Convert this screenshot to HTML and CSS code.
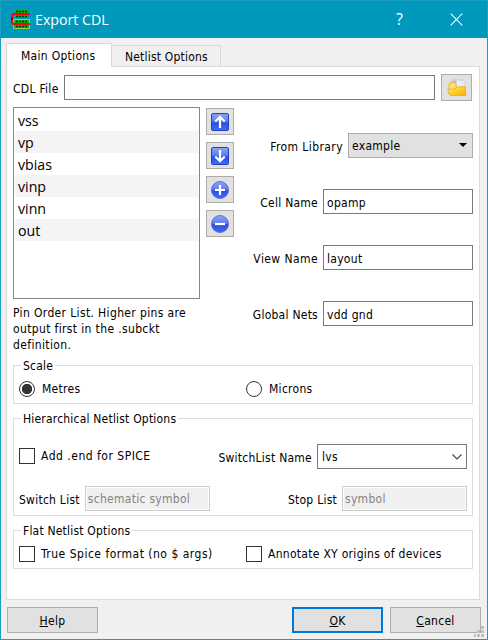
FILE: index.html
```html
<!DOCTYPE html>
<html lang="en">
<head>
<meta charset="utf-8">
<title>Export CDL</title>
<link rel="stylesheet" href="styles.css">
</head>
<body>
<svg class="defs" width="0" height="0">
  <defs>
    <linearGradient id="blue" x1="0" y1="0" x2="0" y2="1">
      <stop offset="0" stop-color="#8fa5f4"/>
      <stop offset=".45" stop-color="#5f7cf0"/>
      <stop offset=".55" stop-color="#2a4fe6"/>
      <stop offset="1" stop-color="#3f6df8"/>
    </linearGradient>
    <linearGradient id="gold" x1="0" y1="0" x2="1" y2="1">
      <stop offset="0" stop-color="#fff2a0"/>
      <stop offset=".5" stop-color="#ffd21c"/>
      <stop offset="1" stop-color="#ffa412"/>
    </linearGradient>
  </defs>
</svg>
<div class="window">
  <header class="titlebar">
    <svg class="logo" width="20" height="20" viewBox="0 0 20 20">
      <path fill="#0cae14" d="M4 0h13v8H4z"/>
      <path fill="#0cae14" stroke="#86d94a" d="M2.500 9.500h16v9h-16z"/>
      <path stroke="#053a05" stroke-width="1.500" stroke-dasharray="2 1" d="M5 1.500h11M5 6.500h11M5 11.500h12M5 16.500h12"/>
      <path fill="none" stroke="#f00" stroke-width="2" d="M19 4H2.500L1 5.500v7L2.500 14H19"/>
      <path fill="#700" d="M0 8h2v2H0z"/>
    </svg>
    <h1 class="title">Export CDL</h1>
    <span class="ask">?</span>
    <svg class="close" width="13" height="13" viewBox="0 0 13 13"><path d="M.7.700l11.600 11.600M12.300.700L.7 12.300"/></svg>
  </header>

  <main class="body">
    <nav class="tabs">
      <div class="tab active"><span>Main Options</span></div>
      <div class="tab"><span>Netlist Options</span></div>
    </nav>
    <section class="panel">
      <div class="file-row">
        <label>CDL File</label>
        <div class="field grow"></div>
        <div class="btn folder">
          <svg width="20" height="18" viewBox="0 0 20 18">
            <path fill="#c9c9cd" d="M4 2l3-2 3 1v5H3z"/>
            <path fill="#e9eefb" stroke="#b4bccb" stroke-width=".6" d="M9 1h7l2 2.500V12H9z"/>
            <path fill="#fff" stroke="#b4bccb" stroke-width=".5" d="M15.500 1v3H18"/>
            <path fill="#ffdf6b" stroke="#f3a51e" stroke-width=".8" d="M2 4.500l6-1.500 1 2v7l-7 3z"/>
            <path fill="url(#gold)" stroke="#f5a623" stroke-width=".8" d="M.6 10.500L8 10l2-2 8-.5.800 9H3.500z"/>
          </svg>
        </div>
      </div>

      <div class="upper">
        <div class="pins">
          <ul class="list">
            <li>vss</li><li>vp</li><li>vbias</li><li>vinp</li><li>vinn</li><li>out</li>
          </ul>
          <p class="note">Pin Order List. Higher pins are<br>output first in the .subckt<br>definition.</p>
        </div>
        <div class="tools">
          <div class="btn tool"><svg width="18" height="18" viewBox="0 0 18 18"><rect x=".5" y=".5" width="17" height="17" rx="1.500" fill="url(#blue)" stroke="#2742b8"/><path class="glyph" d="M9 15V4M4.300 8.500L9 3.800l4.700 4.700"/></svg></div>
          <div class="btn tool"><svg width="18" height="18" viewBox="0 0 18 18"><rect x=".5" y=".5" width="17" height="17" rx="1.500" fill="url(#blue)" stroke="#2742b8"/><path class="glyph" d="M9 3v11M4.300 9.500L9 14.200l4.700-4.700"/></svg></div>
          <div class="btn tool"><svg width="18" height="18" viewBox="0 0 18 18"><circle cx="9" cy="9" r="8.500" fill="url(#blue)" stroke="#4a60c8" stroke-width=".8"/><path class="glyph" d="M9 4v10M4 9h10"/></svg></div>
          <div class="btn tool"><svg width="18" height="18" viewBox="0 0 18 18"><circle cx="9" cy="9" r="8.500" fill="url(#blue)" stroke="#4a60c8" stroke-width=".8"/><path class="glyph" d="M4 9h10"/></svg></div>
        </div>
        <div class="form">
          <div class="form-row"><label class="wide">From Library</label><div class="field combo">example<svg width="8" height="4" viewBox="0 0 8 4"><path d="M0 0h8L4 4z"/></svg></div></div>
          <div class="form-row"><label>Cell Name</label><div class="field">opamp</div></div>
          <div class="form-row"><label class="wide">View Name</label><div class="field">layout</div></div>
          <div class="form-row"><label>Global Nets</label><div class="field">vdd gnd</div></div>
        </div>
      </div>

      <div class="group scale">
        <h2 class="legend">Scale</h2>
        <div class="pair">
          <label class="choice radio-choice"><i class="radio on"></i><span>Metres</span></label>
          <label class="choice radio-choice"><i class="radio"></i><span>Microns</span></label>
        </div>
      </div>

      <div class="group hier">
        <h2 class="legend">Hierarchical Netlist Options</h2>
        <div class="line first">
          <label class="choice spice"><i class="check"></i><span>Add .end for SPICE</span></label>
          <div class="form-row"><label>SwitchList Name</label><div class="field editable">lvs<svg width="10" height="6" viewBox="0 0 10 6"><path d="M.5.500L5 5 9.500.500"/></svg></div></div>
        </div>
        <div class="line">
          <div class="form-row"><label>Switch List</label><div class="field off">schematic symbol</div></div>
          <div class="form-row"><label>Stop List</label><div class="field off">symbol</div></div>
        </div>
      </div>

      <div class="group flat">
        <h2 class="legend">Flat Netlist Options</h2>
        <div class="pair">
          <label class="choice spice"><i class="check"></i><span>True Spice format (no $ args)</span></label>
          <label class="choice"><i class="check"></i><span>Annotate XY origins of devices</span></label>
        </div>
      </div>
    </section>

    <footer class="actions">
      <div class="btn push"><span><u>H</u>elp</span></div>
      <div class="btn push ok"><span><u>O</u>K</span></div>
      <div class="btn push"><span><u>C</u>ancel</span></div>
    </footer>
    <svg class="grip" width="10" height="11" viewBox="0 0 10 11"><path d="M7 0h3v3H7zM3 4h3v3H3zM7 4h3v3H7zM0 8h2v3H0zM3 8h3v3H3zM7 8h3v3H7z"/></svg>
  </main>
</div>
</body>
</html>
```
FILE: styles.css
```css
* { box-sizing: border-box; }

body {
  margin: 0;
  font: 12px/16px "DejaVu Sans Condensed", "DejaVu Sans", sans-serif;
  letter-spacing: .29px;
  color: #000;
}

.defs { position: absolute; }

.window {
  position: relative;
  width: 488px;
  height: 640px;
  display: flex;
  flex-direction: column;
  background: #f0f0f0;
  border: 1px solid #1a9fc0;
}

.titlebar {
  height: 37px;
  display: flex;
  align-items: center;
  padding: 0 24px 0 10px;
  background: #0099bc;
  color: #fff;
  font-family: "Open Sans", sans-serif;
  letter-spacing: 0;
}

.logo { flex: none; }

.title {
  margin: 0 auto 0 4px;
  font-size: 14.200px;
  font-weight: 400;
}

.ask { margin-right: 47px; font-size: 16px; line-height: 18px; padding-bottom: 2px; }
.close path { stroke: #fff; stroke-width: 1.1; }

.body {
  flex: 1;
  display: flex;
  flex-direction: column;
  padding: 5px 7px 0 5px;
}

.tabs {
  display: flex;
  align-items: flex-end;
  height: 24px;
  margin-bottom: -1px;
}

.tab {
  height: 22px;
  width: 109px;
  padding-left: 13px;
  line-height: 22px;
  letter-spacing: .2px;
  border: 1px solid #d9d9d9;
  border-left: 0;
}

.tab.active {
  z-index: 1;
  height: 24px;
  width: 106px;
  padding-left: 14px;
  line-height: 24px;
  letter-spacing: .29px;
  background: #fff;
  border-left: 1px solid #d9d9d9;
  border-bottom: 0;
}

.panel {
  height: 534px;
  padding: 7px 6px 0;
  background: #fff;
  border: 1px solid #dcdcdc;
}

.file-row {
  display: flex;
  align-items: center;
  height: 27px;
}

.file-row label { width: 51px; padding-top: 2px; }
.grow { flex: 1; }

.field {
  height: 25px;
  padding-left: 3px;
  line-height: 26px;
  background: #fff;
  border: 1px solid #7a7a7a;
}

.btn {
  display: flex;
  align-items: center;
  justify-content: center;
  background: #e1e1e1;
  border: 1px solid #adadad;
}

.folder { width: 31px; height: 27px; margin: 0 1px 0 6px; }

.upper { display: flex; height: 264px; padding-top: 6px; }
.pins { width: 187px; }

.list {
  height: 192px;
  margin: 0;
  padding: 1px;
  list-style: none;
  border: 1px solid #828790;
  font: 14.200px/22px "Open Sans", sans-serif;
  letter-spacing: 0;
}

.list li { height: 22px; padding-left: 3px; line-height: 23px; }
.list li:nth-child(even) { background: #f4f4f4; }

.note { margin: 6px 0 0; white-space: nowrap; letter-spacing: .36px; }

.tools {
  display: flex;
  flex-direction: column;
  gap: 7px;
  margin: 1px 0 0 6px;
}

.tool { width: 28px; height: 27px; }
.glyph { fill: none; stroke: #fff; stroke-width: 2.2; }

.form {
  flex: 1;
  display: flex;
  flex-direction: column;
  gap: 31px;
  padding-top: 26px;
}

.form-row { display: flex; justify-content: flex-end; align-items: center; }
.form-row label { margin-right: 5px; padding-top: 2px; letter-spacing: .25px; }
.form-row .wide { letter-spacing: .42px; }
.form-row .field { width: 150px; }

.form-row .combo,
.editable {
  display: flex;
  align-items: center;
  justify-content: space-between;
}

.form-row .combo {
  width: 125px;
  padding-right: 5px;
  line-height: 28px;
  background: #e1e1e1;
  border-color: #adadad;
}

.form-row .combo svg { margin-bottom: 1px; }

.editable { padding: 0 4px; }
.editable path { fill: none; stroke: #444; stroke-width: 1.1; }

.form-row .off {
  width: 125px;
  padding-left: 2px;
  line-height: 25px;
  color: #838383;
  background: #f0f0f0;
  border-color: #ccc;
  box-shadow: inset 0 0 0 1px #fff;
}

.group { border: 1px solid #dcdcdc; }

.legend {
  width: max-content;
  height: 16px;
  margin: -9px 0 0 7px;
  padding: 0 2px;
  background: #fff;
  font-size: 12px;
  font-weight: 400;
  line-height: 18px;
  letter-spacing: .2px;
}

.scale { height: 39px; }
.hier { height: 98px; margin-top: 14px; }
.flat { height: 39px; margin-top: 14px; }

.pair {
  display: grid;
  grid-template-columns: 227px 1fr;
  padding-left: 5px;
  margin-top: 8px;
}

.choice {
  display: flex;
  align-items: center;
  gap: 6px;
  height: 16px;
  line-height: 18px;
  white-space: nowrap;
}

.radio-choice { gap: 7px; }
.spice { letter-spacing: .5px; }

.check, .radio {
  width: 16px;
  height: 16px;
  background: #fff;
  border: 1px solid #333;
}

.radio { border-radius: 50%; }
.radio.on { background: radial-gradient(circle, #333 4.800px, #fff 5.500px); }

.line {
  display: flex;
  justify-content: space-between;
  align-items: center;
  padding: 0 5px;
  margin-top: 17px;
}

.line.first { margin-top: 18px; }
.line.first .choice { margin-bottom: 1px; }

.actions {
  display: flex;
  gap: 7px;
  margin: 7px -1px 0 1px;
}

.push { width: 91px; height: 26px; padding-top: 2px; }
.ok { margin-left: auto; padding-top: 1px; border: 2px solid #0078d7; }

.grip {
  position: absolute;
  right: 3px;
  bottom: 2px;
  fill: #bfbfbf;
}
```
